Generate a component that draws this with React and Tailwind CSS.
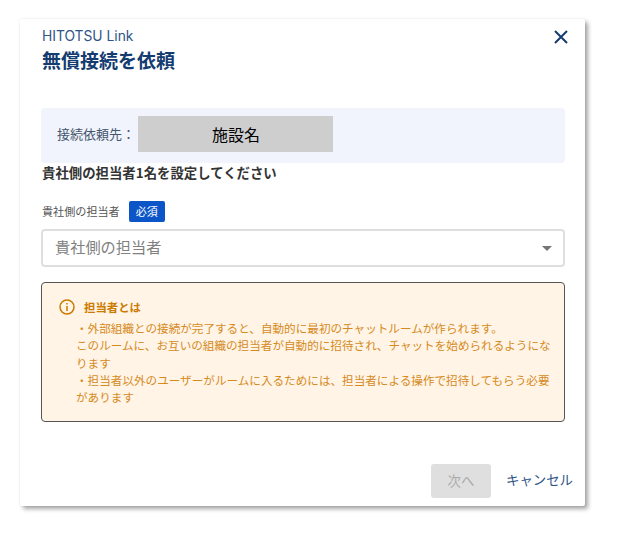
const jp = { fontFamily: '"Noto Sans CJK JP", "Noto Sans", sans-serif' };

export default function App() {
  return (
    <div className="min-h-[556px] w-[636px] bg-white pl-[20px] pt-[19px]" style={jp}>
      <div className="flex h-[487px] w-[565px] flex-col rounded-[2px] bg-white pl-[21px] pr-[20px] shadow-[3px_3px_4px_rgba(0,0,0,0.35),0_0_3px_rgba(0,0,0,0.08)]">
        <div className="relative h-[89px] pl-[1px] pt-[8px]">
          <div className="text-[13.8px] leading-[18px] text-[#2f5487]" style={{ fontFamily: '"Inter", "Noto Sans", sans-serif' }}>HITOTSU Link</div>
          <div className="mt-[2px] text-[19px] font-bold leading-[26px] text-[#143c70]">無償接続を依頼</div>
          <svg className="absolute right-[-3px] top-[11px] h-[14px] w-[14px]" viewBox="0 0 14 14" fill="none" stroke="#143c70" strokeWidth="2">
            <path d="M1 1L13 13M13 1L1 13" />
          </svg>
        </div>
        <div className="flex h-[55px] items-start rounded-[4px] bg-[#f1f4fc] pl-[16px] pt-[8px]">
          <span className="w-[81px] whitespace-nowrap text-[13px] leading-[36px] text-[#45566e]">接続依頼先：</span>
          <div className="flex h-[36px] w-[195px] shrink-0 items-center justify-center bg-[#cecece] pl-[1px] text-[16px] text-black">施設名</div>
        </div>
        <div className="pl-[1px] text-[13.4px] font-bold leading-[18px] text-[#333333]">貴社側の担当者1名を設定してください</div>
        <div className="mt-[20px] flex items-center pl-[1px]">
          <span className="text-[11.1px] leading-[21px] text-[#555555]">貴社側の担当者</span>
          <span className="ml-[9px] flex h-[21px] w-[36px] items-center justify-center rounded-[2px] bg-[#0b55c8] text-[11px] text-white">必須</span>
        </div>
        <div className="mt-[7px] flex h-[38px] items-center justify-between rounded-[4px] border-2 border-[#dfdfdf] pb-[4px] pl-[12px] pr-[11px]">
          <span className="text-[15.2px] text-[#808080]">貴社側の担当者</span>
          <svg className="mt-[4px] h-[5px] w-[10px]" viewBox="0 0 10 5" fill="#757575"><path d="M0 0H10L5 5Z" /></svg>
        </div>
        <div className="mt-[15px] h-[140px] rounded-[4px] border border-[#555555] bg-[#fff4e6] pl-[17px] pr-[15px] pt-[16px]">
          <div className="flex items-center">
            <svg className="h-[16px] w-[16px]" viewBox="0 0 16 16" fill="none" stroke="#cc7a00" strokeWidth="1.5">
              <circle cx="8" cy="8" r="7" />
              <path d="M8 7V12" />
              <path d="M8 4V5.6" />
            </svg>
            <span className="ml-[9px] text-[11.4px] font-bold leading-[16px] text-[#cc7a00]">担当者とは</span>
          </div>
          <p className="mr-[-3px] mt-[5px] pl-[17px] text-[11.6px] leading-[17.3px] text-[#d68a1c]">
            ・外部組織との接続が完了すると、自動的に最初のチャットルームが作られます。<br />
            このルームに、お互いの組織の担当者が自動的に招待され、チャットを始められるようになります<br />
            ・担当者以外のユーザーがルームに入るためには、担当者による操作で招待してもらう必要があります
          </p>
        </div>
        <div className="mt-[42px] flex items-center">
          <div className="ml-[390px] flex h-[34px] w-[60px] shrink-0 items-center justify-center rounded-[3px] bg-[#dfdfdf] pb-[1px] text-[13.4px] text-[#aaaaaa]">次へ</div>
          <span className="mb-[3px] ml-[15px] whitespace-nowrap text-[13.4px] text-[#2f5487]">キャンセル</span>
        </div>
      </div>
    </div>
  );
}
